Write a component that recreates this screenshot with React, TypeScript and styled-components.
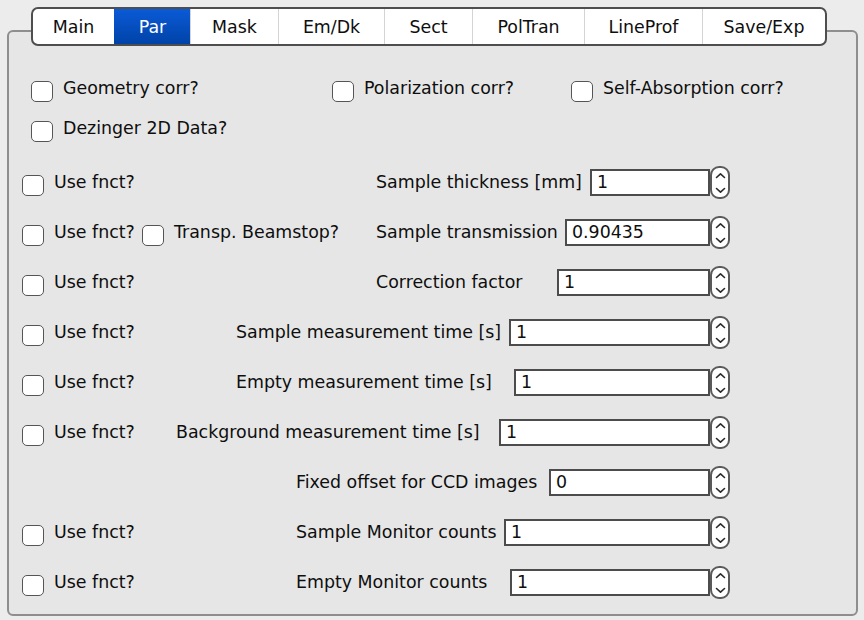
import styled, { createGlobalStyle } from "styled-components";

const GlobalStyle = createGlobalStyle`
  html, body {
    margin: 0;
    padding: 0;
    background: #ececec;
  }
  body {
    font-family: "DejaVu Sans", "Liberation Sans", sans-serif;
    color: #0e0e0e;
  }
`;

const Window = styled.div`
  width: 864px;
  height: 620px;
  box-sizing: border-box;
  padding: 7px 6px 0 7px;
  background: #ececec;
`;

const TabBar = styled.div`
  position: relative;
  z-index: 1;
  display: flex;
  width: 796px;
  height: 39px;
  margin: 0 0 -16px 24px;
  box-sizing: border-box;
  border: 2px solid #4e4e4e;
  border-radius: 7px;
  background: #fff;
  overflow: hidden;
`;

const Tab = styled.div<{ $w: number; $active?: boolean }>`
  flex: 0 0 ${(p) => p.$w}px;
  display: flex;
  align-items: center;
  justify-content: center;
  font-size: 17.4px;
  box-sizing: border-box;
  border-left: 1px solid ${(p) => (p.$active ? "transparent" : "#d4d4d4")};
  color: ${(p) => (p.$active ? "#fff" : "#0e0e0e")};
  background: ${(p) =>
    p.$active ? "linear-gradient(#0b5ad6, #0043a8)" : "transparent"};

  &:first-child {
    border-left: none;
  }
`;

const Panel = styled.div`
  height: 586px;
  box-sizing: border-box;
  border: 2px solid #8e8e8e;
  border-radius: 6px;
  background: #e6e6e6;
  padding: 36px 126px 0 0;
`;

const TopRow = styled.div`
  display: grid;
  grid-template-columns: 301px 239px auto;
  align-items: center;
  height: 40px;
  padding-left: 22px;
`;

const CheckItem = styled.label<{ $w?: number }>`
  display: flex;
  align-items: center;
  gap: 10px;
  font-size: 17.4px;
  white-space: nowrap;
  flex: 0 0 ${(p) => (p.$w ? `${p.$w}px` : "auto")};
`;

const Box = styled.span`
  flex: 0 0 auto;
  width: 22px;
  height: 21px;
  margin-top: 6px;
  box-sizing: border-box;
  border: 1.5px solid #555;
  border-radius: 5px;
  background: #fff;
`;

const Params = styled.div`
  margin-top: 9px;
`;

const ParamRow = styled.div`
  display: flex;
  align-items: center;
  height: 50px;
  padding-left: 13px;
`;

const LeftGroup = styled.div<{ $w: number }>`
  display: flex;
  align-items: center;
  flex: 0 0 ${(p) => p.$w}px;
`;

const FieldLabel = styled.div<{ $w: number }>`
  flex: 0 0 ${(p) => p.$w}px;
  font-size: 17.4px;
  white-space: nowrap;
`;

const ValueInput = styled.div`
  flex: 1;
  height: 27px;
  box-sizing: border-box;
  border: 2px solid #4c4c4c;
  background: #fff;
  padding-left: 5px;
  font-size: 17.4px;
  line-height: 23px;
`;

const Spinner = styled.div`
  flex: 0 0 20px;
  height: 33px;
  box-sizing: border-box;
  border: 2px solid #5a5a5a;
  border-radius: 9px;
  background: #fff;
  display: flex;
  flex-direction: column;
  align-items: center;
  justify-content: space-between;
  padding: 4px 0 3px;
`;

const Chevron = ({ up }: { up?: boolean }) => (
  <svg width="11" height="7" viewBox="0 0 11 7">
    <path
      d={up ? "M1.5 5.5 L5.5 1.8 L9.5 5.5" : "M1.5 1.5 L5.5 5.2 L9.5 1.5"}
      fill="none"
      stroke="#2a2a2a"
      strokeWidth="1.6"
      strokeLinecap="round"
      strokeLinejoin="round"
    />
  </svg>
);

const tabs = [
  { name: "Main", w: 81 },
  { name: "Par", w: 76, active: true },
  { name: "Mask", w: 88 },
  { name: "Em/Dk", w: 106 },
  { name: "Sect", w: 88 },
  { name: "PolTran", w: 112 },
  { name: "LineProf", w: 118 },
  { name: "Save/Exp", w: 123 },
];

type Param = {
  label: string;
  value: string;
  labelAt: number;
  inputAt: number;
  useFn: boolean;
  beamstop?: boolean;
};

const params: Param[] = [
  { label: "Sample thickness [mm]", value: "1", labelAt: 376, inputAt: 590, useFn: true },
  { label: "Sample transmission", value: "0.90435", labelAt: 376, inputAt: 565, useFn: true, beamstop: true },
  { label: "Correction factor", value: "1", labelAt: 376, inputAt: 557, useFn: true },
  { label: "Sample measurement time [s]", value: "1", labelAt: 236, inputAt: 509, useFn: true },
  { label: "Empty measurement time [s]", value: "1", labelAt: 236, inputAt: 514, useFn: true },
  { label: "Background measurement time [s]", value: "1", labelAt: 176, inputAt: 499, useFn: true },
  { label: "Fixed offset for CCD images", value: "0", labelAt: 296, inputAt: 549, useFn: false },
  { label: "Sample Monitor counts", value: "1", labelAt: 296, inputAt: 504, useFn: true },
  { label: "Empty Monitor counts", value: "1", labelAt: 296, inputAt: 510, useFn: true },
];

export default function App() {
  return (
    <Window>
      <GlobalStyle />
      <TabBar>
        {tabs.map((t) => (
          <Tab key={t.name} $w={t.w} $active={t.active}>
            {t.name}
          </Tab>
        ))}
      </TabBar>
      <Panel>
        <TopRow>
          <CheckItem>
            <Box />
            Geometry corr?
          </CheckItem>
          <CheckItem>
            <Box />
            Polarization corr?
          </CheckItem>
          <CheckItem>
            <Box />
            Self-Absorption corr?
          </CheckItem>
        </TopRow>
        <TopRow>
          <CheckItem>
            <Box />
            Dezinger 2D Data?
          </CheckItem>
        </TopRow>
        <Params>
          {params.map((p) => (
            <ParamRow key={p.label}>
              <LeftGroup $w={p.labelAt - 22}>
                {p.useFn && (
                  <CheckItem $w={120}>
                    <Box />
                    Use fnct?
                  </CheckItem>
                )}
                {p.beamstop && (
                  <CheckItem>
                    <Box />
                    Transp. Beamstop?
                  </CheckItem>
                )}
              </LeftGroup>
              <FieldLabel $w={p.inputAt - p.labelAt}>{p.label}</FieldLabel>
              <ValueInput>{p.value}</ValueInput>
              <Spinner>
                <Chevron up />
                <Chevron />
              </Spinner>
            </ParamRow>
          ))}
        </Params>
      </Panel>
    </Window>
  );
}
